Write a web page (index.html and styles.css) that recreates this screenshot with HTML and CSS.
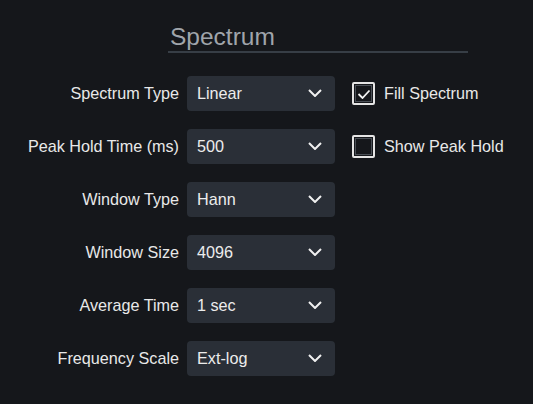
FILE: index.html
```html
<!DOCTYPE html>
<html>
<head>
<meta charset="utf-8">
<link rel="stylesheet" href="styles.css">
</head>
<body>
<div class="panel">
  <div class="title">Spectrum</div>
  <div class="form">
    <div class="label">Spectrum Type</div>
    <div class="select"><span>Linear</span><svg class="chev" width="14" height="8" viewBox="0 0 14 8"><path d="M1 1 L7 7 L13 1" /></svg></div>
    <label class="check"><span class="box checked"><svg width="14" height="10" viewBox="0 0 14 10"><path d="M1.5 5 L5.5 9 L12.5 1.5" /></svg></span><span>Fill Spectrum</span></label>

    <div class="label">Peak Hold Time (ms)</div>
    <div class="select"><span>500</span><svg class="chev" width="14" height="8" viewBox="0 0 14 8"><path d="M1 1 L7 7 L13 1" /></svg></div>
    <label class="check"><span class="box"></span><span>Show Peak Hold</span></label>

    <div class="label">Window Type</div>
    <div class="select"><span>Hann</span><svg class="chev" width="14" height="8" viewBox="0 0 14 8"><path d="M1 1 L7 7 L13 1" /></svg></div>
    <div></div>

    <div class="label">Window Size</div>
    <div class="select"><span>4096</span><svg class="chev" width="14" height="8" viewBox="0 0 14 8"><path d="M1 1 L7 7 L13 1" /></svg></div>
    <div></div>

    <div class="label">Average Time</div>
    <div class="select"><span>1 sec</span><svg class="chev" width="14" height="8" viewBox="0 0 14 8"><path d="M1 1 L7 7 L13 1" /></svg></div>
    <div></div>

    <div class="label">Frequency Scale</div>
    <div class="select"><span>Ext-log</span><svg class="chev" width="14" height="8" viewBox="0 0 14 8"><path d="M1 1 L7 7 L13 1" /></svg></div>
    <div></div>
  </div>
</div>
</body>
</html>
```
FILE: styles.css
```css
html, body {
  margin: 0;
  padding: 0;
  background: #15171b;
}
body {
  width: 533px;
  height: 404px;
  overflow: hidden;
  font-family: "Liberation Sans", Arial, sans-serif;
  color: #e8e8e8;
}
.panel {
  padding-top: 23px;
}
.title {
  margin-left: 168px;
  width: 298px;
  padding-left: 2px;
  font-size: 24.5px;
  line-height: 28px;
  color: #a0a5ab;
  border-bottom: 2px solid #373e46;
}
.form {
  margin-top: 23px;
  display: grid;
  grid-template-columns: 179px 148px auto;
  grid-auto-rows: 35px;
  column-gap: 8px;
  row-gap: 18px;
  align-items: center;
  font-size: 16.2px;
}
.label {
  text-align: right;
  white-space: nowrap;
}
.select {
  height: 35px;
  box-sizing: border-box;
  background: #2a2f37;
  border-radius: 4px;
  display: flex;
  align-items: center;
  justify-content: space-between;
  padding: 0 13px 0 10px;
  color: #ececec;
}
.chev {
  display: block;
  margin-top: -2px;
}
.chev path {
  fill: none;
  stroke: #f0f0f0;
  stroke-width: 2;
}
.check {
  display: flex;
  align-items: center;
  gap: 9px;
  margin-left: 9px;
  white-space: nowrap;
}
.box {
  width: 23px;
  height: 23px;
  box-sizing: border-box;
  border: 2px solid #e4e4e4;
  border-radius: 2px;
  box-shadow: inset 0 0 0 1px #15171b, inset 0 0 0 2px #4a4f56;
  display: flex;
  align-items: center;
  justify-content: center;
}
.box svg path {
  fill: none;
  stroke: #f2f2f2;
  stroke-width: 1.8;
}
```
